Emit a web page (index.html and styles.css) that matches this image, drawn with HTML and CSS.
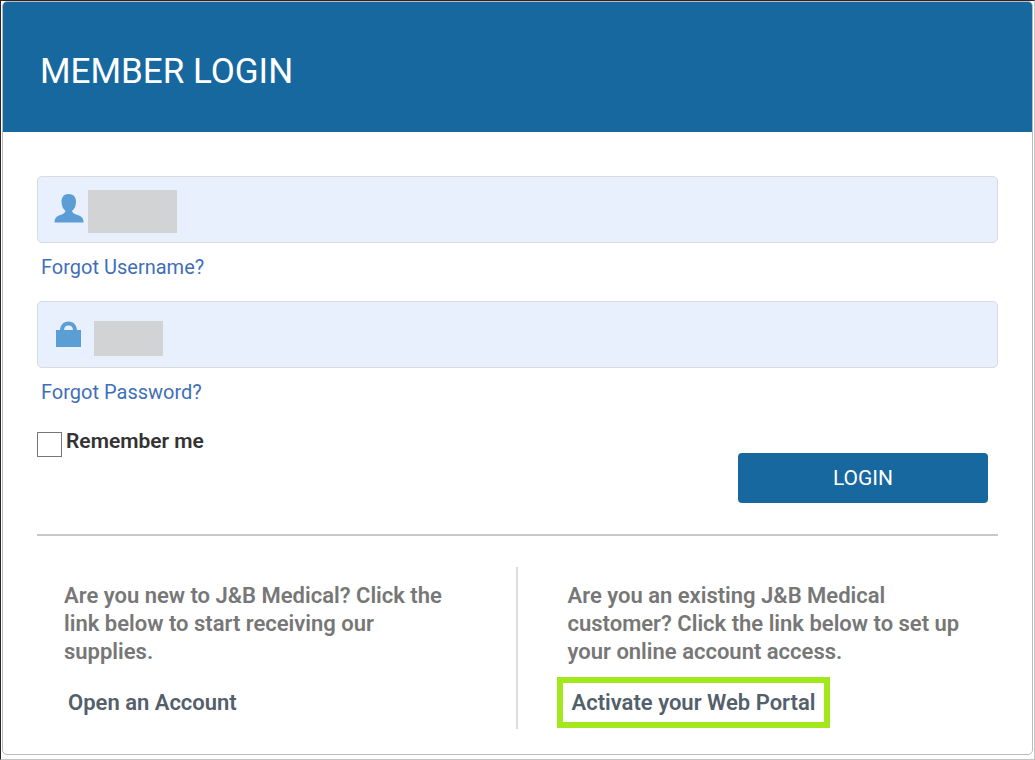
FILE: index.html
```html
<!DOCTYPE html>
<html lang="en">
<head>
    <meta charset="UTF-8">
    <meta name="viewport" content="width=device-width, initial-scale=1.0">
    <title>Member Login</title>
    <link rel="stylesheet" href="styles.css">
</head>
<body>
    <div class="page">
        <main class="card">
            <header class="card-header">
                <h1>MEMBER LOGIN</h1>
            </header>
            <div class="card-body">
                <form class="login-form">
                    <div class="field">
                        <svg class="field-icon" viewBox="0 0 30 30" aria-hidden="true">
                            <path d="M14.500 1C10 1 7.500 4 7.500 8.500C7.500 13 9 16 11.500 18C11 20.500 8 21.500 5 22.500C2 23.500 .5 25.500 .5 29.500H29.500C29.500 25.500 28 23.500 25 22.500C22 21.500 18.500 20.500 18 18C20.500 16 22 13 22 8.500C22 4 19.500 1 14.500 1Z"/>
                        </svg>
                        <input type="text" id="username" aria-label="Username">
                        <span class="mask mask-username"></span>
                    </div>
                    <a class="forgot" href="#">Forgot Username?</a>
                    <div class="field">
                        <svg class="field-icon" viewBox="0 0 30 30" aria-hidden="true">
                            <path d="M2 12H6C6.500 7 9.500 3.500 14.500 3.500S22.500 7 23 12H27V29H2ZM10 12H19C18.500 8.500 17 7.500 14.500 7.500S10.500 8.500 10 12Z"/>
                        </svg>
                        <input type="password" id="password" aria-label="Password">
                        <span class="mask mask-password"></span>
                    </div>
                    <a class="forgot" href="#">Forgot Password?</a>
                    <div class="remember">
                        <input type="checkbox" id="remember">
                        <label for="remember">Remember me</label>
                    </div>
                    <button type="submit" class="login-button">LOGIN</button>
                </form>
                <div class="options">
                    <section class="option">
                        <p>Are you new to J&amp;B Medical? Click the link below to start receiving our supplies.</p>
                        <a class="option-link" href="#">Open an Account</a>
                    </section>
                    <section class="option">
                        <p>Are you an existing J&amp;B Medical customer? Click the link below to set up your online account access.</p>
                        <a class="option-link highlight" href="#">Activate your Web Portal</a>
                    </section>
                </div>
            </div>
        </main>
    </div>
</body>
</html>
```
FILE: styles.css
```css
* {
    box-sizing: border-box;
}
body {
    margin: 0;
    font-family: Roboto, "Liberation Sans", sans-serif;
    background-color: #fff;
}
a {
    text-decoration: none;
}
.page {
    min-height: 100vh;
    padding: 0 1px 4px;
    border: 1px solid #c4c4c4;
    border-top-color: #2a2630;
    border-left-color: #2a2630;
}
.card {
    border: 1px solid #bbb;
    border-radius: 5px;
    overflow: hidden;
}
.card-header {
    padding: 49px 37px 39px;
    background-color: #17689f;
}
.card-header h1 {
    margin: 0;
    font-size: 35px;
    line-height: 42px;
    font-weight: 400;
    color: #fff;
}
.card-body {
    padding: 44px 34px 25px;
}
.login-form {
    display: flex;
    flex-direction: column;
}
.field {
    display: flex;
    align-items: center;
    position: relative;
    height: 67px;
    padding-left: 16px;
    background-color: #e8f0fe;
    border: 1px solid #d8dbe0;
    border-radius: 5px;
}
.field-icon {
    flex: none;
    width: 30px;
    height: 30px;
    margin-bottom: 4px;
    fill: #5b9dd5;
}
.field input {
    flex: 1;
    height: 100%;
    padding: 0 8px;
    border: none;
    outline: none;
    background: transparent;
    font-family: inherit;
    font-size: 20px;
}
.mask {
    position: absolute;
    background-color: #d1d3d4;
}
.mask-username {
    top: 13px;
    left: 50px;
    width: 89px;
    height: 43px;
}
.mask-password {
    top: 19px;
    left: 56px;
    width: 69px;
    height: 35px;
}
.forgot {
    align-self: flex-start;
    margin: 10px 4px 20px;
    font-size: 20px;
    line-height: 28px;
    color: #3f6fb8;
}
.remember {
    display: flex;
    align-items: flex-start;
    gap: 4px;
    margin-top: 1px;
    font-size: 21px;
    line-height: 28px;
    font-weight: 600;
    color: #333;
}
.remember input {
    appearance: none;
    width: 25px;
    height: 25px;
    margin: 5px 0 0;
    border: 1px solid #777;
    background-color: #fff;
}
.remember input:checked {
    background-color: #17689f;
}
.login-button {
    align-self: flex-end;
    width: 250px;
    height: 50px;
    margin: -4px 10px 31px;
    border: none;
    border-radius: 4px;
    background-color: #17689f;
    font-family: inherit;
    font-size: 21px;
    color: #fff;
    cursor: pointer;
}
.options {
    display: grid;
    grid-template-columns: 1fr 1fr;
    padding-top: 31px;
    border-top: 2px solid #c8c8c8;
}
.option {
    min-height: 162px;
    padding: 15px 27px 0 50px;
}
.option:first-child {
    padding: 15px 50px 0 27px;
    border-right: 2px solid #ddd;
}
.option p {
    margin: 0 0 11px;
    font-size: 22px;
    line-height: 28px;
    font-weight: 600;
    color: #777;
}
.option-link {
    display: inline-block;
    padding: 12px 4px 11px;
    font-size: 22px;
    line-height: 28px;
    font-weight: 600;
    color: #535f6b;
}
.option-link.highlight {
    margin-left: -11px;
    padding: 6px 9px 5px;
    border: 6px solid #a2e81c;
}
```
